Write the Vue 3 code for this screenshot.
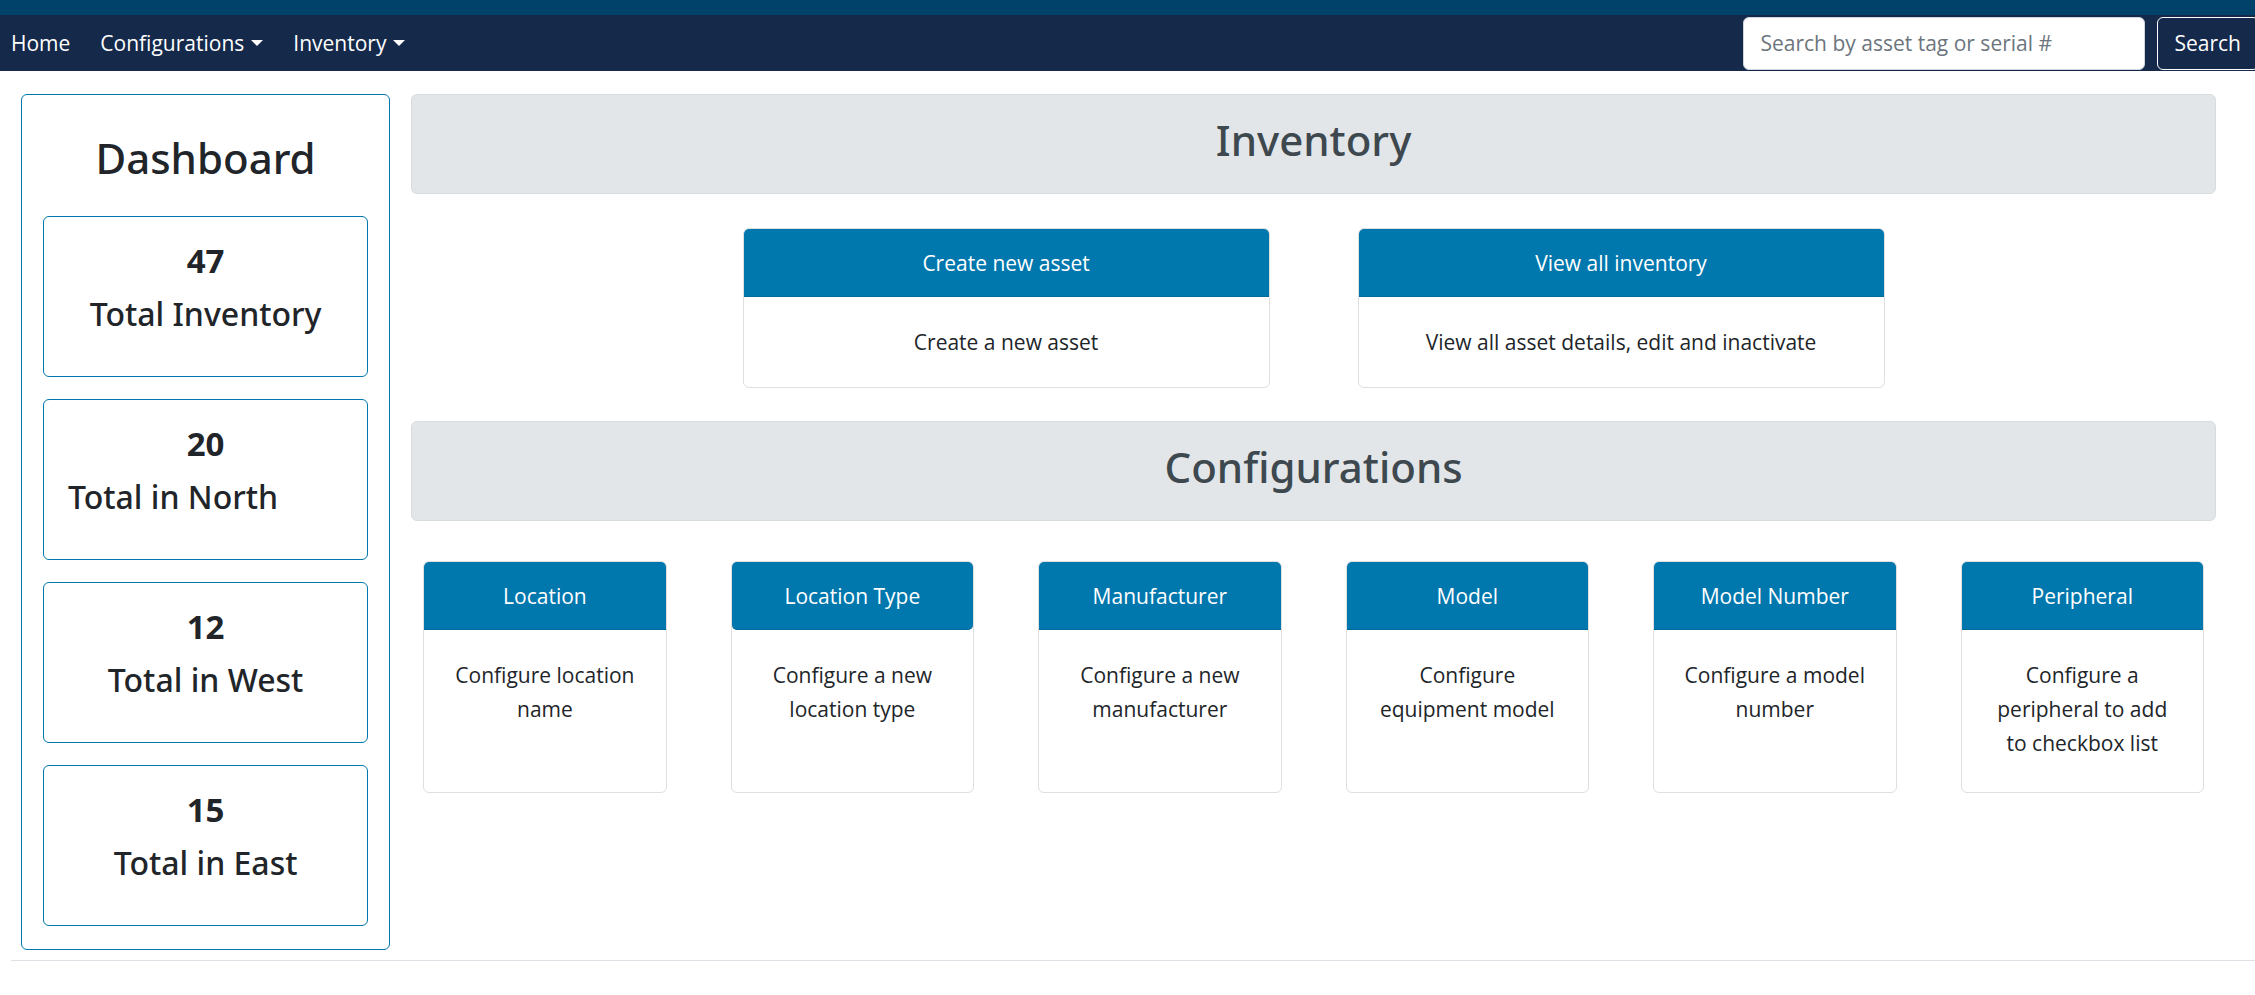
<script setup>
import { ref } from 'vue'

const query = ref('')

const totals = [
  { count: 47, label: 'Total Inventory' },
  { count: 20, label: 'Total in North', start: true },
  { count: 12, label: 'Total in West' },
  { count: 15, label: 'Total in East' }
]

const inventoryCards = [
  { title: 'Create new asset', text: 'Create a new asset' },
  { title: 'View all inventory', text: 'View all asset details, edit and inactivate' }
]

const configCards = [
  { title: 'Location', text: 'Configure location name' },
  { title: 'Location Type', text: 'Configure a new location type', rounded: true },
  { title: 'Manufacturer', text: 'Configure a new manufacturer' },
  { title: 'Model', text: 'Configure equipment model' },
  { title: 'Model Number', text: 'Configure a model number' },
  { title: 'Peripheral', text: 'Configure a peripheral to add to checkbox list' }
]
</script>

<template>
  <div class="page">
    <header class="top">
      <nav class="nav" aria-label="Main">
        <a class="nav-link" href="#">Home</a>
        <button class="nav-link" type="button">Configurations<span class="caret"></span></button>
        <button class="nav-link" type="button">Inventory<span class="caret"></span></button>
      </nav>
      <form class="search" @submit.prevent>
        <input
          v-model="query"
          class="search-input"
          type="search"
          aria-label="Search by asset tag or serial #"
          placeholder="Search by asset tag or serial #"
        />
        <button class="search-button" type="submit">Search</button>
      </form>
    </header>

    <div class="layout">
      <aside class="dashboard">
        <h2 class="dashboard-title">Dashboard</h2>
        <section v-for="t in totals" :key="t.label" class="total">
          <p class="count">{{ t.count }}</p>
          <h3 class="total-label" :class="{ start: t.start }">{{ t.label }}</h3>
        </section>
      </aside>

      <main>
        <h2 class="banner">Inventory</h2>
        <div class="row pair">
          <article v-for="c in inventoryCards" :key="c.title" class="card">
            <a class="card-head" href="#">{{ c.title }}</a>
            <p class="card-text">{{ c.text }}</p>
          </article>
        </div>

        <h2 class="banner">Configurations</h2>
        <div class="row six">
          <article v-for="c in configCards" :key="c.title" class="card">
            <a class="card-head" :class="{ rounded: c.rounded }" href="#">{{ c.title }}</a>
            <p class="card-text">{{ c.text }}</p>
          </article>
        </div>
      </main>
    </div>
    <hr class="rule" />
  </div>
</template>

<style>
body {
  margin: 0;
  background: #fff;
}
</style>

<style scoped>
.page {
  overflow-x: hidden;
  color: #212529;
  font-family: "Segoe UI", "Open Sans", "Noto Sans", sans-serif;
  font-size: 21px;
  line-height: 34px;
}

.page *,
.page *::before {
  box-sizing: border-box;
}

h2,
h3,
p {
  margin: 0;
}

h2,
h3 {
  font-family: "Segoe UI", "Noto Sans", "Open Sans", sans-serif;
  font-weight: 500;
}

a {
  text-decoration: none;
}

button,
input {
  font: inherit;
}

.top {
  display: flex;
  align-items: center;
  justify-content: space-between;
  height: 71px;
  padding-left: 11px;
  border-top: 15px solid #00426a;
  background: #15294b;
}

.nav {
  display: flex;
  gap: 30px;
}

.nav-link {
  display: flex;
  align-items: center;
  gap: 7px;
  padding: 0;
  border: 0;
  background: none;
  color: #fff;
}

.caret {
  border: 6px solid transparent;
  border-top-color: #fff;
  border-bottom: 0;
}

.search {
  display: flex;
  gap: 12px;
  margin-right: -4px;
}

.search-input {
  width: 402px;
  height: 53px;
  padding: 0 17px;
  border: 1px solid #ced4da;
  border-radius: 6px;
  background: #fff;
  color: #212529;
}

.search-input::placeholder {
  color: #6c757d;
  opacity: 1;
}

.search-button {
  height: 53px;
  padding: 0 17px;
  border: 1px solid #fff;
  border-radius: 6px;
  background: none;
  color: #fff;
}

.layout {
  display: grid;
  grid-template-columns: 9fr 44fr;
  gap: 21px;
  padding: 23px 39px 10px 21px;
}

.dashboard {
  display: flex;
  flex-direction: column;
  gap: 22px;
  padding: 36px 21px 23px;
  border: 1px solid #0077ad;
  border-radius: 6px;
  text-align: center;
}

.dashboard-title {
  padding-bottom: 9px;
  font-size: 42px;
  line-height: 54px;
}

.total {
  display: flex;
  flex-direction: column;
  gap: 12px;
  padding: 24px 24px 42px;
  border: 1px solid #0077ad;
  border-radius: 6px;
}

.count {
  font-size: 33px;
  font-weight: 700;
  line-height: 40px;
}

.total-label {
  font-size: 32px;
  line-height: 41px;
}

.start {
  text-align: left;
}

.banner {
  padding: 18px 17px 26px;
  border: 1px solid #d7dcdf;
  border-radius: 6px;
  background: #e2e6e9;
  color: #3e484f;
  font-size: 42px;
  line-height: 54px;
  text-align: center;
}

.row {
  display: grid;
}

.pair {
  grid-template-columns: 29.2% 29.2%;
  justify-content: center;
  gap: 88px;
  padding: 34px 0 33px;
}

.six {
  grid-template-columns: repeat(6, 1fr);
  gap: 64px;
  padding: 40px 12px 0;
}

.card {
  border: 1px solid #dfdfdf;
  border-radius: 6px;
  background: #fff;
  text-align: center;
}

.card-head {
  display: block;
  padding: 17px 22px 16px;
  border-bottom: 1px solid #006a9b;
  border-radius: 5px 5px 0 0;
  background: #0077ad;
  color: #fff;
}

.card-head.rounded {
  border-radius: 5px;
}

.card-text {
  padding: 28px 24px;
}

.six .card-text {
  padding-bottom: 32px;
}

.rule {
  margin: 0 0 0 11px;
  border: 0;
  border-top: 1px solid #dee2e6;
}
</style>
